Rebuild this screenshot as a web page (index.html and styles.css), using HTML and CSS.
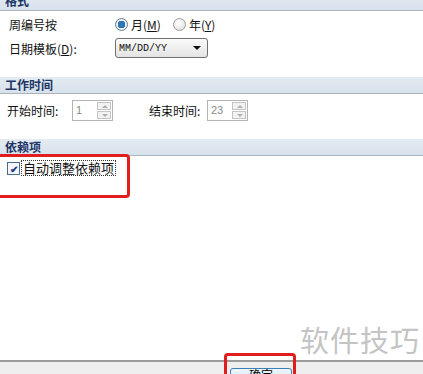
FILE: index.html
```html
<!DOCTYPE html>
<html lang="zh-CN">
<head>
    <meta charset="UTF-8">
    <title>格式</title>
    <link rel="stylesheet" href="styles.css">
</head>
<body>
    <div class="page">
        <div class="section-head first">格式</div>
        <div class="row">
            <span class="label">周编号按</span>
            <span class="radio checked"></span><span class="opt">月(<u>M</u>)</span>
            <span class="radio"></span><span class="opt">年(<u>Y</u>)</span>
        </div>
        <div class="row">
            <span class="label">日期模板(<u>D</u>):</span>
            <div class="select">
                <span>MM/DD/YY</span>
                <span class="caret"></span>
            </div>
        </div>

        <div class="section-head">工作时间</div>
        <div class="row times">
            <span class="label short">开始时间:</span>
            <div class="spin">
                <span class="val">1</span>
                <div class="spin-btns"><span class="up"></span><span class="down"></span></div>
            </div>
            <span class="label short end">结束时间:</span>
            <div class="spin">
                <span class="val">23</span>
                <div class="spin-btns"><span class="up"></span><span class="down"></span></div>
            </div>
        </div>

        <div class="section-head">依赖项</div>
        <div class="row check-row">
            <span class="checkbox">&#10004;</span>
            <span class="check-label">自动调整依赖项</span>
        </div>

        <div class="spacer"></div>

        <div class="footer">
            <button class="btn">确定</button>
        </div>

        <div class="mark mark-dep"></div>
        <div class="mark mark-ok"></div>
        <div class="watermark">软件技巧</div>
    </div>
</body>
</html>
```

FILE: styles.css
```css
body {
    margin: 0;
    padding: 0;
    background: #ffffff;
    font-family: "Noto Sans CJK SC", "Noto Sans", sans-serif;
    font-size: 12px;
    color: #111111;
    overflow: hidden;
}

.page {
    position: relative;
    height: 374px;
    overflow: hidden;
    display: flex;
    flex-direction: column;
}

.section-head {
    flex-shrink: 0;
    height: 16px;
    line-height: 16px;
    padding-left: 5px;
    background: linear-gradient(#e4ebf2, #d8e2ec);
    border-bottom: 1px solid #aab4bf;
    color: #1d3566;
    font-weight: bold;
    font-size: 12px;
    margin-top: 17px;
}

.section-head.first {
    margin-top: -6px;
    line-height: 14px;
}

.row {
    flex-shrink: 0;
    display: flex;
    align-items: center;
    height: 24px;
    padding-left: 9px;
}

.row:nth-of-type(2) {
    margin-top: 1px;
}

.label {
    width: 106px;
}

.label.short {
    width: 65px;
}

.times {
    margin-top: 4px;
    padding-left: 7px;
}

.label.end {
    margin-left: 36px;
    width: 58px;
}

.radio {
    width: 11px;
    height: 11px;
    border-radius: 50%;
    border: 1px solid #9a9a9a;
    background: radial-gradient(circle at 40% 35%, #ffffff, #dcdcdc);
    margin-right: 3px;
}

.radio.checked {
    background: radial-gradient(circle, #2f79b8 0 3px, #1a4f80 3.5px, #f4f4f4 4px, #dadada);
    border-color: #5a7f9f;
}

.opt {
    margin-right: 12px;
}

.select {
    box-sizing: border-box;
    width: 93px;
    height: 20px;
    border: 1px solid #707070;
    border-radius: 3px;
    background: linear-gradient(#fbfbfb, #e3e3e3);
    display: flex;
    align-items: center;
    justify-content: space-between;
    padding: 0 6px 0 3px;
    font-family: "Liberation Mono", monospace;
    font-size: 10px;
}

.caret {
    width: 0;
    height: 0;
    border-left: 4px solid transparent;
    border-right: 4px solid transparent;
    border-top: 4px solid #111111;
}

.spin {
    width: 41px;
    height: 21px;
    box-sizing: border-box;
    border: 1px solid #b4b4b4;
    display: flex;
    justify-content: space-between;
    padding: 1px;
}

.val {
    color: #8a8a8a;
    font-family: "Liberation Sans", sans-serif;
    font-size: 11px;
    line-height: 17px;
    padding-left: 2px;
}

.spin-btns {
    display: flex;
    flex-direction: column;
    gap: 1px;
    width: 14px;
}

.spin-btns span {
    flex: 1;
    border: 1px solid #c4c4c4;
    background: #f2f2f2;
    position: relative;
}

.spin-btns .up::after,
.spin-btns .down::after {
    content: "";
    position: absolute;
    left: 4px;
    top: 2px;
    border-left: 3px solid transparent;
    border-right: 3px solid transparent;
}

.spin-btns .up::after {
    border-bottom: 3px solid #b0b0b0;
}

.spin-btns .down::after {
    border-top: 3px solid #b0b0b0;
}

.check-row {
    padding-left: 7px;
}

.checkbox {
    width: 11px;
    height: 11px;
    border: 1px solid #4c6c8c;
    background: #f4f6f8;
    color: #1e3d8a;
    font-size: 10px;
    line-height: 11px;
    text-align: center;
    font-weight: bold;
    margin-right: 2px;
}

.check-label {
    outline: 1px dotted #333333;
    padding: 0 1px;
    line-height: 14px;
    font-size: 13px;
}

.spacer {
    flex: 1;
}

.footer {
    flex-shrink: 0;
    height: 12px;
    border-top: 2px solid #9c9c9c;
    background: #efefef;
    position: relative;
}

.btn {
    position: absolute;
    left: 230px;
    top: 6px;
    width: 62px;
    height: 22px;
    border: 1px solid #3c80b4;
    border-radius: 3px;
    background: linear-gradient(#ecf6fd, #c7e2f6);
    font-family: "Noto Sans CJK SC", sans-serif;
    font-size: 12px;
    line-height: 12px;
    padding: 0 0 9px;
}

.mark {
    position: absolute;
    border: 3px solid #e11d1d;
    border-radius: 4px;
}

.mark-dep {
    left: -6px;
    top: 154px;
    width: 130px;
    height: 38px;
}

.mark-ok {
    left: 224px;
    top: 353px;
    width: 66px;
    height: 40px;
}

.watermark {
    position: absolute;
    left: 300px;
    top: 318px;
    font-size: 29px;
    color: #c4c4c4;
    letter-spacing: 1px;
}
```
